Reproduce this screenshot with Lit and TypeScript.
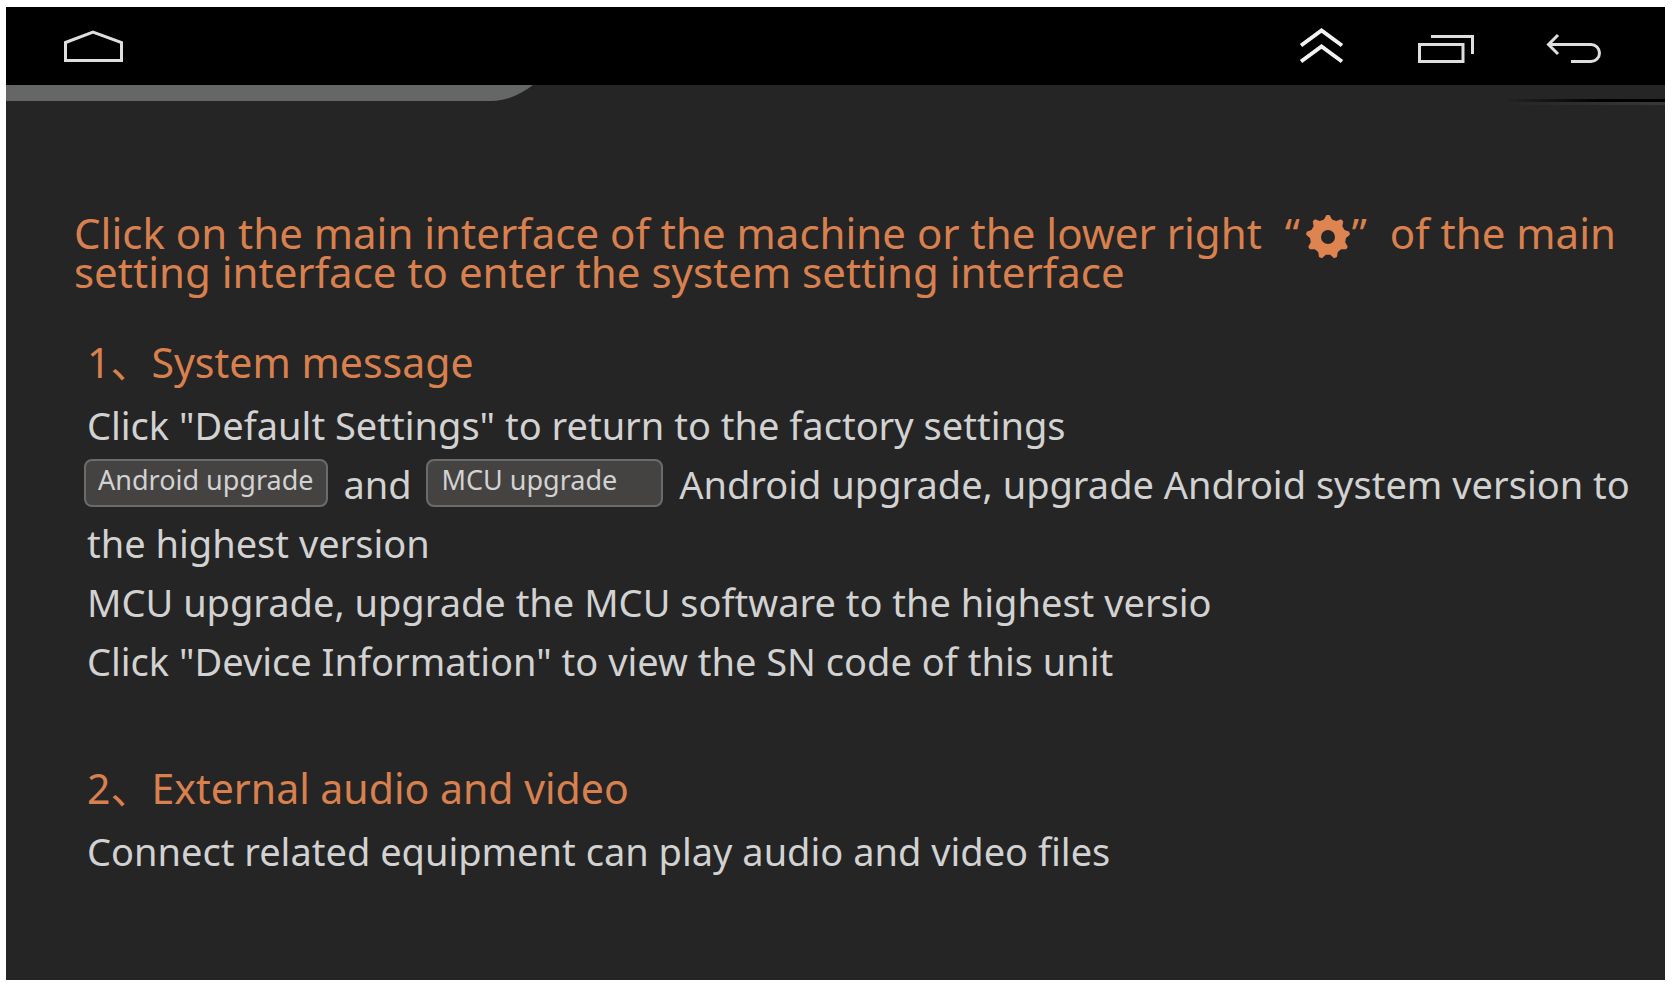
import { LitElement, html, css, svg } from "lit";
import { customElement } from "lit/decorators.js";

const TEETH = 9;

/** Outline of a gear with TEETH teeth, the first one pointing up. */
function gearPath(outer: number, inner: number, hole: number): string {
  const points: string[] = [];
  const at = (r: number, deg: number) => {
    const a = ((deg - 90) * Math.PI) / 180;
    return `${(22 + r * Math.cos(a)).toFixed(2)} ${(22 + r * Math.sin(a)).toFixed(2)}`;
  };
  for (let i = 0; i < TEETH; i++) {
    const c = (i * 360) / TEETH;
    points.push(at(inner, c - 13), at(outer, c - 4), at(outer, c + 4), at(inner, c + 13));
  }
  return `M${points.join("L")}Z M${22 - hole} 22a${hole} ${hole} 0 1 0 ${hole * 2} 0a${hole} ${hole} 0 1 0 ${-hole * 2} 0Z`;
}

@customElement("nav-bar")
export class NavBar extends LitElement {
  static styles = css`
    :host {
      display: block;
      background: #000;
    }
    .bar {
      display: flex;
      align-items: center;
      justify-content: space-between;
      height: 78px;
      padding: 0 64px 0 55px;
    }
    .group {
      display: flex;
      gap: 68px;
    }
    .key {
      display: flex;
      padding: 0;
      border: 0;
      background: none;
      color: #dedede;
      cursor: pointer;
    }
    .icon {
      fill: none;
      stroke: currentColor;
      stroke-width: 3;
    }
    .bold {
      color: #f2f2f2;
      stroke-width: 4;
    }
  `;

  render() {
    return html`
      <nav class="bar" aria-label="System navigation">
        <button class="key" aria-label="Home">
          <svg class="icon" width="64" height="40" viewBox="0 0 64 40">
            <path d="M4.500 16.500L32 6L60.500 16.500V34.500H4.500Z" />
          </svg>
        </button>
        <div class="group">
          <button class="key" aria-label="Expand">
            <svg class="icon bold" width="46" height="40" viewBox="0 0 46 40">
              <path d="M2 19.500L22.500 4.500L43 19.500M2 35.500L22.500 20.500L43 35.500" />
            </svg>
          </button>
          <button class="key" aria-label="Recent apps">
            <svg class="icon" width="64" height="40" viewBox="0 0 64 40">
              <path d="M6.500 18.500H50V35.500H6.500ZM18 10.500H59.500V28" />
            </svg>
          </button>
          <button class="key" aria-label="Back">
            <svg class="icon" width="56" height="40" viewBox="0 0 56 40">
              <path d="M13 9L3.500 18.500L13 28M4 18.500H46a8.500 8.500 0 0 1 0 17H26" />
            </svg>
          </button>
        </div>
      </nav>
    `;
  }
}

@customElement("app-root")
export class AppRoot extends LitElement {
  static styles = css`
    :host {
      display: block;
      box-sizing: border-box;
      min-height: 100vh;
      padding: 7px 7px 6px 6px;
      background: #fff;
      font-family: "Noto Sans", "Noto Sans CJK SC", sans-serif;
    }
    .screen {
      min-height: calc(100vh - 13px);
      background: #252525;
      color: #d2d2d2;
    }
    .edge {
      display: flex;
      justify-content: space-between;
      align-items: flex-end;
      height: 16px;
    }
    .glint {
      width: 160px;
      height: 3px;
      background: linear-gradient(to right, #252525, #000 60%);
      border-style: solid;
      border-image: linear-gradient(to right, #252525, #383838) 1;
      border-width: 0 0 3px;
      margin-bottom: -4px;
    }
    .content {
      padding: 112px 24px 64px 81px;
    }
    .intro,
    .title {
      margin: 0;
      font-size: 42px;
      font-weight: 400;
      line-height: 39px;
      color: #d9804f;
    }
    .intro {
      margin-left: -13px;
    }
    .quoted {
      padding: 0 12px;
      white-space: nowrap;
    }
    .gear {
      width: 44px;
      height: 44px;
      margin: -12px 2px -8px 6px;
      vertical-align: -2px;
      fill: #de8450;
    }
    .title {
      margin-top: 52px;
      font-size: 41px;
    }
    .text {
      margin: 0;
      font-size: 38px;
      line-height: 59px;
    }
    .first {
      margin-top: 14px;
    }
    .chip {
      height: 48px;
      padding: 0 12px 6px;
      margin: -8px 6px -8px -3px;
      border: 2px solid #6c6b6b;
      border-radius: 8px;
      background: #444342;
      color: #d2d2d2;
      font: inherit;
      font-size: 27px;
      line-height: 36px;
      vertical-align: 9px;
    }
    .wide {
      margin-left: 4px;
      padding: 0 44px 6px 14px;
    }
    .last {
      margin-top: 78px;
    }
  `;

  render() {
    return html`
      <main class="screen">
        <nav-bar></nav-bar>
        <div class="edge">
          <svg width="527" height="16" viewBox="0 0 527 16" aria-hidden="true">
            <path d="M0 0H527C516 8 503 16 485 16H0Z" fill="#656666" />
          </svg>
          <div class="glint"></div>
        </div>
        <div class="content">
          <p class="intro">Click on the main interface of the machine or the lower right <span class="quoted">“<svg class="gear" viewBox="0 0 44 44" role="img" aria-label="settings">${svg`<path fill-rule="evenodd" d=${gearPath(22, 18, 7)} />`}</svg>”</span> of the main setting interface to enter the system setting interface</p>

          <h2 class="title">1、System message</h2>
          <p class="text first">Click "Default Settings" to return to the factory settings</p>
          <p class="text"><button class="chip">Android upgrade</button> and <button class="chip wide">MCU upgrade</button> Android upgrade, upgrade Android system version to the highest version</p>
          <p class="text">MCU upgrade, upgrade the MCU software to the highest versio</p>
          <p class="text">Click "Device Information" to view the SN code of this unit</p>

          <h2 class="title last">2、External audio and video</h2>
          <p class="text first">Connect related equipment can play audio and video files</p>
        </div>
      </main>
    `;
  }
}
